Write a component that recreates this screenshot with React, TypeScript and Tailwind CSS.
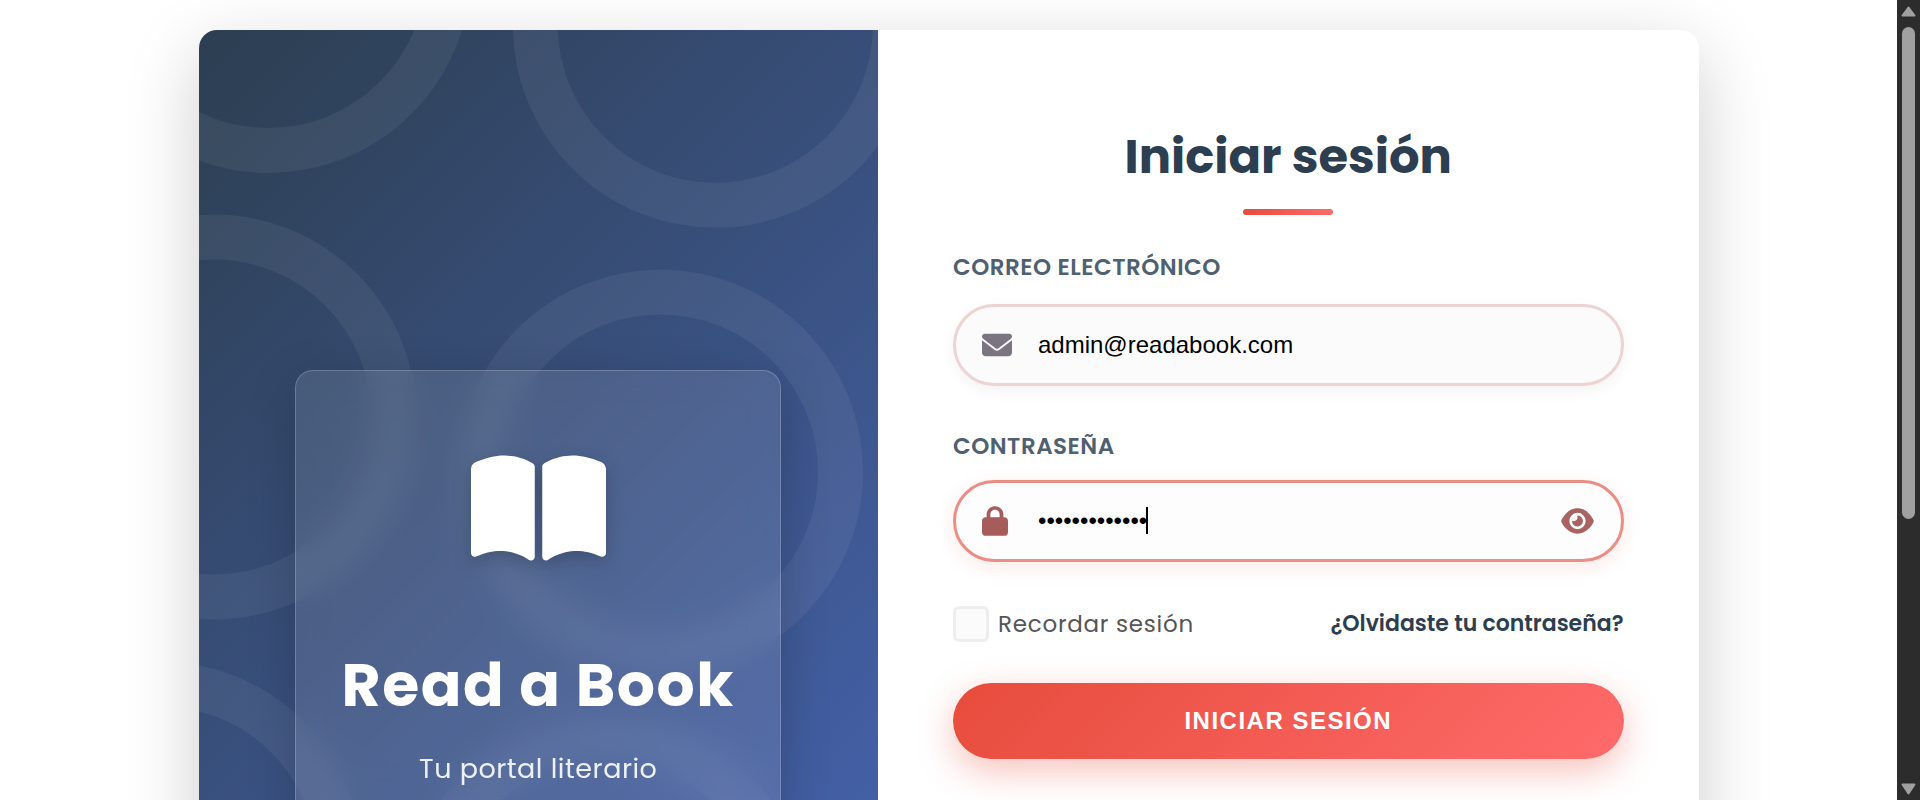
import { useState } from "react";
import { FaEnvelope, FaEye, FaLock } from "react-icons/fa6";

const ringCenters = [
  [69.5, -59.5],
  [516.3, -4.7],
  [14.9, 387],
  [461.5, 442],
  [-39, 834],
  [407, 888],
];

function RingPattern() {
  return (
    <svg className="absolute inset-0 h-full w-full" aria-hidden="true">
      {ringCenters.map(([cx, cy]) => (
        <circle key={`${cx}:${cy}`} cx={cx} cy={cy} r={180} fill="none" stroke="#fff" strokeOpacity={0.06} strokeWidth={45} />
      ))}
    </svg>
  );
}

function BookIcon() {
  return (
    <svg viewBox="0 0 576 512" fill="currentColor" className="h-[120px] w-[135px] drop-shadow-[0_6px_9px_rgba(0,0,0,0.2)]" aria-hidden="true">
      <path d="M144.3 32.04C106.9 31.29 63.7 41.44 18.6 61.29c-11.42 5.026-18.6 16.67-18.6 29.15l0 357.6c0 11.55 11.99 19.55 22.45 14.65c126.3-59.14 219.8 11 223.8 14.01C249.1 478.9 252.5 480 256 480c12.4 0 16-11.38 16-15.98V80.04c0-5.203-2.531-10.08-6.781-13.08C263.3 65.58 216.7 33.35 144.3 32.04zM557.4 61.29c-45.11-19.79-88.48-29.61-125.7-29.26c-72.44 1.312-118.1 33.55-120.9 34.92C306.5 69.96 304 74.83 304 80.04v383.1C304 468.4 307.5 480 320 480c3.484 0 6.938-1.125 9.781-3.328c3.925-3.018 97.44-73.16 223.8-14c10.46 4.896 22.45-3.105 22.45-14.65l.0001-357.6C575.1 77.97 568.8 66.31 557.4 61.29z" />
    </svg>
  );
}

function BrandPanel() {
  return (
    <section className="relative flex w-[45.3%] items-center justify-center overflow-hidden bg-[linear-gradient(135deg,#2c3e50,#4a69bd)]">
      <RingPattern />
      <div className="relative flex w-full max-w-[486px] flex-col items-center rounded-[18px] border border-white/20 bg-white/10 px-6 pt-[77px] pb-[52px] text-white shadow-[0_12px_48px_rgba(0,0,0,0.2)] backdrop-blur-[15px]">
        <BookIcon />
        <h1 className="mt-[72px] text-[60px] leading-[90px] font-bold tracking-[1.5px] whitespace-nowrap">Read a Book</h1>
        <p className="mt-3 text-[27px] leading-[54px] tracking-[0.5px] opacity-90">Tu portal literario</p>
      </div>
    </section>
  );
}

function LoginForm() {
  const [email, setEmail] = useState("admin@readabook.com");
  const [password, setPassword] = useState("readabook1234");
  return (
    <section className="flex-1 px-[75px] pt-[91px] pb-[429px]">
      <h2 className="text-center text-[48px] leading-[72px] font-bold text-[#2c3e50]">Iniciar sesión</h2>
      <div className="mx-auto mt-4 h-[6px] w-[90px] rounded-full bg-[linear-gradient(90deg,#e74c3c,#ff6b6b)]" />
      <form className="mt-[35px]" onSubmit={(event) => event.preventDefault()}>
        <label htmlFor="email" className="block text-[23px] leading-[34px] font-semibold tracking-[0.5px] text-[#4f6071] uppercase">
          Correo electrónico
        </label>
        <div className="relative mt-5">
          <FaEnvelope className="absolute top-1/2 left-[29px] size-[30px] -translate-y-1/2 text-[#7b7581]" aria-hidden="true" />
          <input
            id="email"
            type="email"
            value={email}
            onChange={(event) => setEmail(event.target.value)}
            className="h-[82px] w-full rounded-full border-[3px] border-[#ecd4d3] bg-[#fbfbfb] pr-8 pl-[82px] font-['Liberation_Sans',Arial,sans-serif] text-[24px] text-black shadow-[0_5px_15px_rgba(0,0,0,0.05)] outline-none"
          />
        </div>
        <label htmlFor="password" className="mt-[43px] block text-[23px] leading-[34px] font-semibold tracking-[0.5px] text-[#4f6071] uppercase">
          Contraseña
        </label>
        <div className="relative mt-[17px]">
          <FaLock className="absolute top-1/2 left-[29px] h-[30px] w-[26px] -translate-y-1/2 text-[#a55c5b]" aria-hidden="true" />
          <input
            id="password"
            type="password"
            value={password}
            onChange={(event) => setPassword(event.target.value)}
            className="h-[82px] w-full rounded-full border-[3px] border-[#ea8e85] bg-[#fdfdfd] pr-20 pl-[82px] font-['Liberation_Sans',Arial,sans-serif] text-[24px] text-black shadow-[0_5px_20px_rgba(231,76,60,0.12)] outline-none"
          />
          <span className="absolute top-[27px] left-[193px] h-[27px] w-[2px] bg-black" />
          <button type="button" aria-label="Mostrar contraseña" className="absolute top-1/2 right-[30px] -translate-y-1/2 text-[#a96462]">
            <FaEye className="h-[29px] w-[33px]" />
          </button>
        </div>
        <div className="mt-[44px] flex items-center justify-between">
          <label className="flex items-center gap-[9px] text-[23px] leading-[34px] tracking-[0.75px] text-[#555555]">
            <input type="checkbox" className="size-9 appearance-none rounded-[6px] border-[3px] border-[#eeeeee] bg-[#fbfbfb]" />
            Recordar sesión
          </label>
          <a href="#recuperar" className="text-[22px] leading-[34px] font-semibold text-[#2c3e50]">
            ¿Olvidaste tu contraseña?
          </a>
        </div>
        <button
          type="submit"
          className="mt-[41px] h-[76px] w-full rounded-full bg-[linear-gradient(135deg,#e74c3c,#ff6b6b)] font-['Liberation_Sans',Arial,sans-serif] text-[24px] font-bold tracking-[1.5px] text-white uppercase shadow-[0_12px_36px_rgba(231,76,60,0.35)]"
        >
          Iniciar sesión
        </button>
      </form>
    </section>
  );
}

function ScrollTrack() {
  return (
    <div className="flex h-full w-[23px] shrink-0 flex-col items-center justify-between bg-[#2c2c2c] pt-[6px] pb-[5px]" aria-hidden="true">
      <div className="flex h-[65%] flex-col items-center gap-[10px]">
        <svg width="15" height="11" viewBox="0 0 15 11" className="shrink-0">
          <path d="M7.5 1.5 13.5 9.5H1.5Z" fill="#a0a0a0" stroke="#a0a0a0" strokeWidth="2" strokeLinejoin="round" />
        </svg>
        <div className="w-[13px] flex-1 rounded-full bg-[#a0a0a0]" />
      </div>
      <svg width="15" height="12" viewBox="0 0 15 12">
        <path d="M7.5 10.5 13.5 1.5H1.5Z" fill="#a0a0a0" stroke="#a0a0a0" strokeWidth="2" strokeLinejoin="round" />
      </svg>
    </div>
  );
}

export default function App() {
  return (
    <div className="flex h-screen overflow-hidden bg-white font-[Poppins,Inter,sans-serif]">
      <main className="h-full flex-1 overflow-hidden py-[30px]">
        <div className="mx-auto flex w-full max-w-[1500px] overflow-hidden rounded-[18px] bg-white shadow-[0_22px_75px_rgba(0,0,0,0.2)]">
          <BrandPanel />
          <LoginForm />
        </div>
      </main>
      <ScrollTrack />
    </div>
  );
}
